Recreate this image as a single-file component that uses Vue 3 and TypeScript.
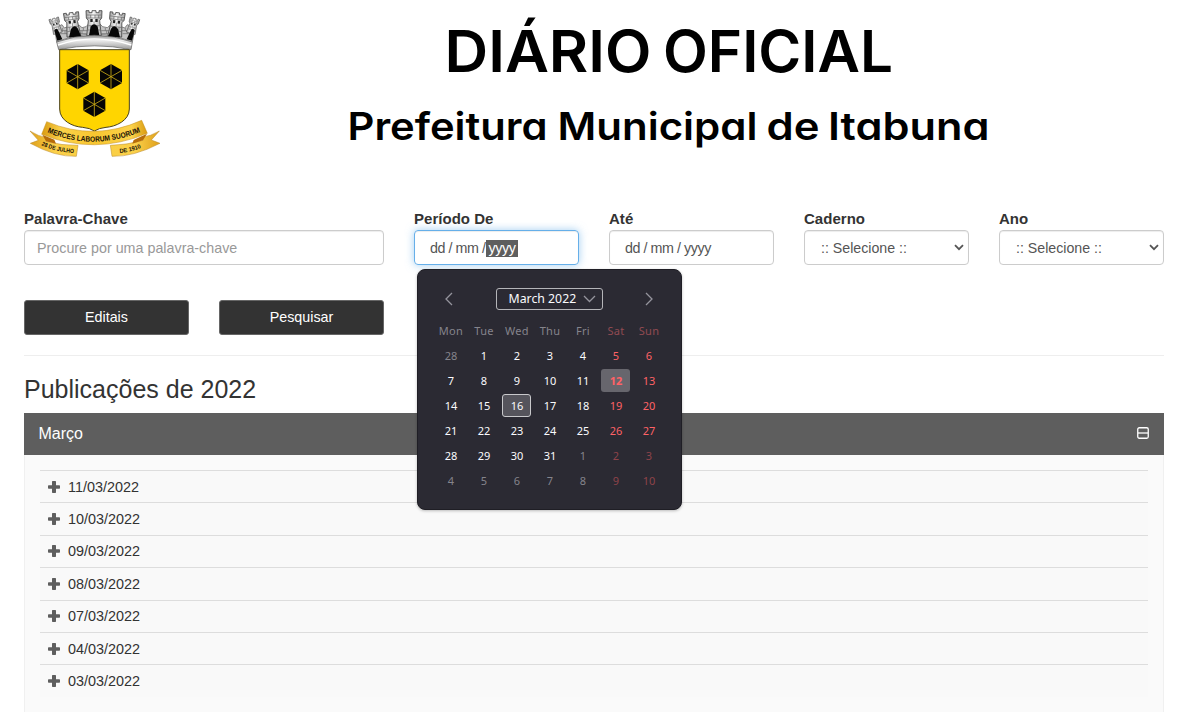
<script setup lang="ts">
interface Day { n: number; muted?: boolean }

const weekdays: string[] = ['Mon', 'Tue', 'Wed', 'Thu', 'Fri', 'Sat', 'Sun']
const days: Day[] = [
  { n: 28, muted: true },
  ...Array.from({ length: 31 }, (_, i): Day => ({ n: i + 1 })),
  ...Array.from({ length: 10 }, (_, i): Day => ({ n: i + 1, muted: true })),
]
const editions: string[] = [
  '11/03/2022', '10/03/2022', '09/03/2022', '08/03/2022',
  '07/03/2022', '04/03/2022', '03/03/2022',
]
const selects: string[] = ['Caderno', 'Ano']

interface Tower { x: number; y: number; s: number; r: number }
const towers: Tower[] = [
  { x: 101, y: 55, s: 0.62, r: -16 },
  { x: 345, y: 55, s: 0.62, r: 16 },
  { x: 153, y: 38, s: 0.95, r: -7 },
  { x: 293, y: 38, s: 0.95, r: 7 },
  { x: 222, y: 32, s: 1, r: 0 },
]
const hexes: [number, number][] = [[173, 230], [273, 230], [223, 313]]
</script>

<template>
  <div class="page">
    <header class="masthead">
      <svg class="crest" viewBox="0 0 450 495" width="150" height="165">
        <defs>
          <linearGradient id="metal" x1="0" y1="0" x2="0" y2="1">
            <stop offset="0" stop-color="#888" /><stop offset=".35" stop-color="#eee" /><stop offset="1" stop-color="#999" />
          </linearGradient>
          <linearGradient id="stone" x1="0" y1="0" x2="1" y2="0">
            <stop offset="0" stop-color="#a5a5a5" /><stop offset=".45" stop-color="#f6f6f6" /><stop offset="1" stop-color="#a5a5a5" />
          </linearGradient>
          <linearGradient id="gold" x1="0" y1="0" x2="1" y2="0">
            <stop offset="0" stop-color="#d99a10" /><stop offset=".18" stop-color="#fbd24a" /><stop offset=".5" stop-color="#f8c630" /><stop offset=".85" stop-color="#fbd24a" /><stop offset="1" stop-color="#d99a10" />
          </linearGradient>
          <linearGradient id="goldEnd" x1="0" y1="0" x2="1" y2="0">
            <stop offset="0" stop-color="#f9cf45" /><stop offset=".5" stop-color="#fbd04a" /><stop offset="1" stop-color="#dfa01a" />
          </linearGradient>
          <linearGradient id="goldStart" x1="0" y1="0" x2="1" y2="0">
            <stop offset="0" stop-color="#dfa01a" /><stop offset=".5" stop-color="#fbd04a" /><stop offset="1" stop-color="#f9cf45" />
          </linearGradient>
          <path id="mottoMain" d="M82 397Q220 455 370 393" />
          <path id="mottoLeft" d="M64 436Q112 457 168 460" />
          <path id="mottoRight" d="M299 459Q335 456 367 442" />
        </defs>
        <path d="M104 84L126 74 133 84 143 80 178 76 186 83 198 80 206 72 240 72 248 80 262 83 270 76 304 80 314 84 322 74 345 84L337 126Q223 80 110 126Z" fill="#c4c4c4" stroke="#555" stroke-width="2" />
        <path d="M118 92h24M118 101h24M180 92h22M178 101h22M244 92h22M244 101h22M306 92h24M308 101h24M128 84v8M135 92v9M190 84v8M186 92v9M256 84v8M260 92v9M316 84v8M322 92v9" stroke="#666" stroke-width="2" fill="none" />
        <g v-for="t in towers" :key="t.x" :transform="`translate(${t.x} ${t.y}) rotate(${t.r}) scale(${t.s})`">
          <path d="M-24 0h9v6h9V0H6v6h9V0h9l-1 22-6 8 5 45h-44l5-45-6-8Z" fill="url(#stone)" stroke="#444" stroke-width="2.500" />
          <path d="M-22 13h44M-22 22h44M-17 45h34M-19 58h38M-10 13v9M3 13v9M14 13v9M0 32v13M-10 45v13M10 45v13" stroke="#666" stroke-width="2" fill="none" />
          <path d="M-11 25h7v9h-7ZM4 25h7v9h-7Z" fill="#222" />
        </g>
        <path d="M207 106L212 80Q222 66 233 80L238 106ZM147 112L153 87Q163 72 173 85L184 110ZM264 110L274 85Q284 72 294 87L300 112ZM103 92Q108 82 114 90L127 118 112 122ZM320 118L333 90Q339 82 344 92L336 122Z" fill="#080808" />
        <path d="M110 126Q223 85 337 126L333 149Q223 126 116 149Z" fill="url(#metal)" stroke="#555" stroke-width="2" />
        <path d="M114 135Q223 98 334 135" fill="none" stroke="#fff" stroke-width="4" />
        <path d="M119 149H328V327C328 362 287 380 258 382Q237 384 223 393Q210 384 188 382C158 380 119 362 119 327Z" fill="#ffd500" stroke="#4a421b" stroke-width="3" />
        <g v-for="([x, y], i) in hexes" :key="i" :transform="`translate(${x} ${y})`">
          <path d="M0-38L33-19V19L0 38L-33 19V-19Z" fill="#050505" />
          <path d="M0-38V38M-33-19L33 19M33-19L-33 19" stroke="#c9aa16" stroke-width="2.500" />
        </g>
        <path d="M30 393Q54 409 84 414L78 424Q126 437 174 436L169 469Q105 471 31 430L55 421Z" fill="url(#goldStart)" stroke="#b88722" stroke-width="1.500" />
        <path d="M418 393Q393 409 362 412L369 421Q322 435 271 436L276 469Q341 471 420 430L394 420Z" fill="url(#goldEnd)" stroke="#b88722" stroke-width="1.500" />
        <path d="M67 404L103 419 108 431 78 424ZM381 401L341 420 337 431 369 421Z" fill="#b66c09" />
        <path d="M80 365Q223 425 365 361L382 400Q223 467 65 403Z" fill="url(#gold)" stroke="#c38c19" stroke-width="1.500" />
        <g class="motto">
          <text font-size="23"><textPath href="#mottoMain" textLength="287" lengthAdjust="spacingAndGlyphs">MERCES LABORUM SUORUM</textPath></text>
          <text font-size="18"><textPath href="#mottoLeft" textLength="101" lengthAdjust="spacingAndGlyphs">28 DE JULHO</textPath></text>
          <text font-size="18"><textPath href="#mottoRight" textLength="67" lengthAdjust="spacingAndGlyphs">DE 1910</textPath></text>
        </g>
      </svg>
      <svg class="titles" viewBox="340 0 660 165" width="660" height="165">
        <g font-size="57.800">
          <text x="444.500" y="72" textLength="207" lengthAdjust="spacingAndGlyphs">DIÁRIO</text>
          <text x="663" y="72" textLength="230" lengthAdjust="spacingAndGlyphs">OFICIAL</text>
        </g>
        <g font-size="38.500">
          <text x="347.500" y="140" textLength="200" lengthAdjust="spacingAndGlyphs">Prefeitura</text>
          <text x="557.500" y="140" textLength="200" lengthAdjust="spacingAndGlyphs">Municipal</text>
          <text x="766.500" y="140" textLength="53" lengthAdjust="spacingAndGlyphs">de</text>
          <text x="828" y="140" textLength="161.500" lengthAdjust="spacingAndGlyphs">Itabuna</text>
        </g>
      </svg>
    </header>

    <form class="filters" @submit.prevent>
      <div class="field wide">
        <label>Palavra-Chave</label>
        <div class="control placeholder">Procure por uma palavra-chave</div>
      </div>
      <div class="field">
        <label>Período De</label>
        <div class="control date focused">dd / mm /<span class="picked">yyyy</span></div>
        <section class="calendar">
          <div class="cal-head">
            <svg width="10" height="14" viewBox="0 0 10 14"><path d="M8 1L2 7l6 6" /></svg>
            <div class="month">March 2022
              <svg width="13" height="8" viewBox="0 0 13 8"><path d="M1 1l5.500 5.500L12 1" /></svg>
            </div>
            <svg width="10" height="14" viewBox="0 0 10 14"><path d="M2 1l6 6-6 6" /></svg>
          </div>
          <div class="grid">
            <span v-for="(w, i) in weekdays" :key="w" class="weekday" :class="{ weekend: i > 4 }">{{ w }}</span>
            <span
              v-for="(d, i) in days" :key="i" class="day"
              :class="{ weekend: i % 7 > 4, muted: d.muted, selected: !d.muted && d.n === 12, today: !d.muted && d.n === 16 }"
            ><b>{{ d.n }}</b></span>
          </div>
        </section>
      </div>
      <div class="field">
        <label>Até</label>
        <div class="control date">dd / mm / yyyy</div>
      </div>
      <div v-for="s in selects" :key="s" class="field">
        <label>{{ s }}</label>
        <div class="control select">:: Selecione ::
          <svg width="10" height="7" viewBox="0 0 10 7"><path d="M1 1.200l4 4 4-4" /></svg>
        </div>
      </div>
    </form>

    <div class="actions">
      <button>Editais</button>
      <button>Pesquisar</button>
    </div>

    <h2>Publicações de 2022</h2>
    <section class="panel">
      <div class="panel-head">
        <span>Março</span>
        <svg width="12" height="12" viewBox="0 0 12 12"><rect x=".75" y=".75" width="10.500" height="10.500" rx="1.500" /><path d="M1 6h10" /></svg>
      </div>
      <div class="panel-body">
        <div v-for="e in editions" :key="e" class="row">
          <svg width="12" height="12" viewBox="0 0 12 12"><path d="M4.700 0h2.600q.7 0 .7.700V4.200h3.300q.7 0 .7.700v2.200q0 .7-.7.700H8v3.500q0 .7-.7.700H4.700q-.7 0-.7-.7V7.800H.7Q0 7.800 0 7.100V4.900q0-.7.700-.7H4V.7Q4 0 4.700 0Z" /></svg>
          <span>{{ e }}</span>
        </div>
      </div>
    </section>
  </div>
</template>

<style>
body { background: #fff; overflow: hidden; }
</style>

<style scoped>
* { box-sizing: border-box; }
.page { width: 1197px; height: 712px; overflow: hidden; padding: 0 33px 0 24px; font: 15px/21px "Liberation Sans", Arial, sans-serif; color: #333; }
.masthead { display: flex; height: 208px; margin-left: -4px; }
.crest { display: block; }
.motto { font-family: "Liberation Sans", Arial, sans-serif; font-weight: 700; fill: #171006; }
.titles { display: block; margin-left: 170px; font-family: Inter, sans-serif; font-weight: 600; font-feature-settings: "cv11"; fill: #000; }
.filters { display: flex; gap: 30px; }
.field { width: 165px; position: relative; }
.field.wide { width: 360px; }
label { display: block; height: 22px; font-weight: 700; letter-spacing: .03px; }
.control { height: 35px; border: 1px solid #ccc; border-radius: 4px; padding: 0 12px; line-height: 34px; color: #555; box-shadow: inset 0 1px 1px rgba(0,0,0,.075); white-space: pre; font-size: 14.300px; }
.placeholder { color: #999; }
.date { padding-left: 15px; letter-spacing: -.45px; }
.focused { border-color: #66afe9; box-shadow: inset 0 1px 1px rgba(0,0,0,.075), 0 0 8px rgba(102,175,233,.6); }
.picked { background: #5e5e5e; color: #fff; padding: 0 3px 1px; }
.select { display: flex; align-items: center; justify-content: space-between; padding: 0 4px 0 16px; font-size: 14.200px; }
.select svg { fill: none; stroke: #555; stroke-width: 1.800; }
.calendar { position: absolute; z-index: 2; left: 3px; top: 61px; width: 265px; height: 241px; padding: 18px 17px 18px 16px; background: #2b2a33; border: 1px solid #1f1e25; border-radius: 8px; box-shadow: 0 1px 3px rgba(0,0,0,.25); font-family: "Noto Sans", sans-serif; color: #fbfbfe; }
.cal-head { display: flex; align-items: center; justify-content: space-between; height: 21px; padding: 0 10px; }
.cal-head svg { fill: none; stroke: #95949d; stroke-width: 1.300; }
.month { display: flex; align-items: center; justify-content: space-between; width: 107px; height: 22px; padding: 0 6px 0 12px; border: 1px solid #b5b5b9; border-radius: 3px; font-size: 12.300px; white-space: nowrap; }
.grid { display: grid; grid-template-columns: repeat(7, 33px); grid-auto-rows: 25px; margin-top: 9px; font-size: 11px; }
.grid > span { display: flex; align-items: center; justify-content: center; }
.grid b { display: flex; align-items: center; justify-content: center; width: 29px; height: 23px; padding-left: 1px; border-radius: 3px; font-weight: 400; }
.grid > .weekday { color: #85848c; letter-spacing: .3px; padding-left: 1px; }
.grid > .weekday.weekend { color: #914b52; }
.weekend { color: #ff6266; }
.muted { color: #85848c; }
.weekend.muted { color: #8e434a; }
.grid .selected b { background: #67666d; font-weight: 700; }
.grid .today b { background: #55545c; border: 1px solid #c8c8cb; }
.actions { display: flex; gap: 30px; padding: 35px 0 20px; border-bottom: 1px solid #eee; }
button { width: 165px; height: 35px; background: #333; color: #fff; border: 1px solid #666; border-radius: 3px; font: 14.300px "Liberation Sans", Arial, sans-serif; padding: 0 0 1px; }
h2 { margin: 18px 0 8px; font-size: 25px; line-height: 31px; font-weight: 400; }
.panel { background: #fafafa; height: 320px; border: 1px solid #f0f0f0; border-top: 0; }
.panel-head { display: flex; align-items: center; justify-content: space-between; height: 42px; margin: 0 -1px; padding: 0 15px 2px 14.500px; background: #5e5e5e; color: #fff; font-size: 16px; }
.panel-head svg { fill: none; stroke: #fff; stroke-width: 1.300; }
.panel-body { padding: 15px 15px; }
.row { display: flex; align-items: center; gap: 8px; height: 32.400px; padding: 0 0 0 8px; background: #f9f9f9; border-top: 1px solid #ddd; font-size: 14.400px; }
.row span { padding-top: 1px; }
.row svg { fill: #5e5e5e; }
</style>
